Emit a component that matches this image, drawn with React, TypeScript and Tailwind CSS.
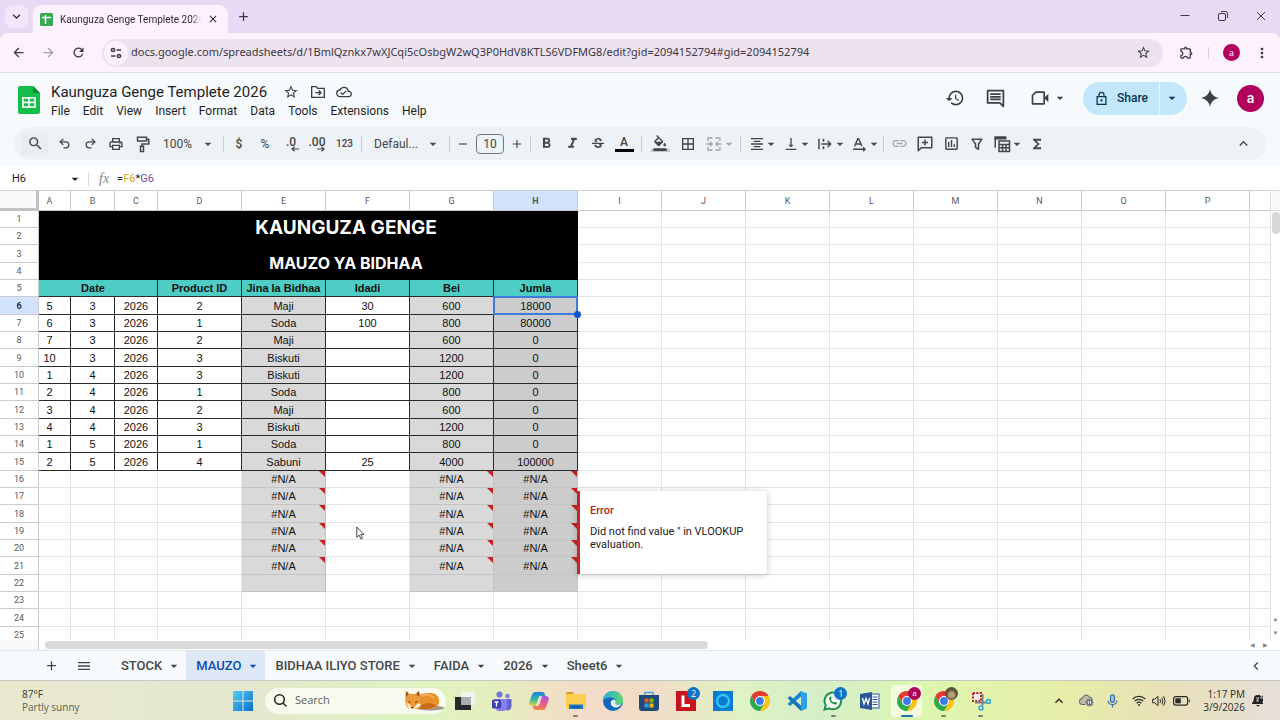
import React from "react";
import {
  MdSearch, MdOutlinePrint, MdArrowDropDown, MdRemove, MdAdd, MdFormatBold, MdFormatItalic, MdStrikethroughS,
  MdFormatColorFill, MdBorderAll, MdFormatAlignCenter, MdVerticalAlignBottom, MdLink, MdFunctions,
  MdKeyboardArrowUp, MdKeyboardArrowDown, MdKeyboardArrowLeft, MdStarBorder, MdHistory, MdMenu, MdArrowBack,
  MdArrowForward, MdRefresh, MdMoreVert, MdClose, MdOutlineCloudDone, MdOutlineInsertChart, MdOutlineExtension,
} from "react-icons/md";
import { Undo2, Redo2 } from "lucide-react";

type Kids = { children?: React.ReactNode };

function Line({ children, size = 18 }: Kids & { size?: number }) {
  return (
    <svg width={size} height={size} viewBox="0 0 24 24" fill="none" stroke="currentColor" strokeWidth="2" aria-hidden="true">
      {children}
    </svg>
  );
}

const FilterIcon = () => <Line><path d="M5.500 5.500h13L14 12v7l-4-2.500V12z" strokeLinejoin="round" /></Line>;
const PaintIcon = () => (
  <Line><path d="M6 3h12v5H6zM18 5.500h3V12h-9v3M10 15h4v7h-4z" /></Line>
);
const MergeIcon = () => (
  <Line><path d="M10 4H4v4M10 20H4v-4M14 4h6v4M14 20h6v-4M2 12h7M6.500 9l3 3-3 3M22 12h-7M17.500 9l-3 3 3 3" strokeWidth="1.700" /></Line>
);
const WrapIcon = () => <Line><path d="M4 5v14M10 5v4M10 15v4M7 12h12M15.500 8l4 4-4 4" /></Line>;
const RotateIcon = () => <Line><path d="M6 15l4.500-10h1L16 15M7.500 12h7M4 19h16M17.500 16.500l2.500 2.500-2.500 2.500" strokeWidth="1.900" /></Line>;
const AddCommentIcon = () => <Line><path d="M3 21V3h18v14H7zM12 6v8M8 10h8" strokeLinejoin="round" /></Line>;
const CommentIcon = () => <Line size={21}><path d="M3 3h18v18l-4-4H3zM6 7h12M6 10h12M6 13h12" strokeLinejoin="round" /></Line>;
const TableViewIcon = () => (
  <Line><path d="M3 17V3h14M8 8h14v14H8zM8 12.500h14M8 17h14M12.700 12.500V22M17.300 12.500V22" /><path d="M3 3h14v2H3z" fill="currentColor" /></Line>
);
const FolderMoveIcon = () => (
  <Line size={16}><path d="M2.500 20V4h7l2 2.500h10V20zM8 13h8M13 9.500l3.500 3.500-3.500 3.500" /></Line>
);
const MeetIcon = () => (
  <Line size={20}><path d="M7 5h10v14H3V9z" strokeLinejoin="round" /><path d="M17 12l5-5v10z" fill="currentColor" stroke="none" /></Line>
);
const LockIcon = () => (
  <Line size={15}><path d="M5 9h14v12.500H5zM8 9V6a4 4 0 0 1 8 0v3" /><circle cx="12" cy="15" r="1.800" fill="currentColor" stroke="none" /></Line>
);
const DecimalIcon = ({ more }: { more?: boolean }) => (
  <span className="flex flex-col items-center text-xs leading-3 font-medium">
    {more ? ".00" : ".0"}
    <svg className="-mt-0.5 ml-2" width="8" height="6" viewBox="0 0 8 6" fill="none" stroke="currentColor" strokeWidth="1.200" aria-hidden="true">
      {more ? <path d="M0 3h7M4.500 .7 7 3 4.500 5.300" /> : <path d="M8 3H1M3.500 .7 1 3l2.500 2.300" />}
    </svg>
  </span>
);

function Tool({ label, wide, children }: Kids & { label: string; wide?: boolean }) {
  return (
    <button aria-label={label} className={`flex h-7 shrink-0 items-center justify-center ${wide ? "w-7" : "w-[26px]"}`}>
      {children}
    </button>
  );
}
function DropTool({ label, children }: Kids & { label: string }) {
  return (
    <button aria-label={label} className="flex h-7 w-[34px] shrink-0 items-center justify-center">
      {children}
      <MdArrowDropDown className="-mr-1 -ml-0.5 shrink-0" size={16} />
    </button>
  );
}
const Sep = ({ wide }: { wide?: boolean }) => <span className={`h-4 w-px shrink-0 bg-[#c7cace] ${wide ? "mx-1" : "mx-0.5"}`} />;

function SheetsLogo() {
  return (
    <svg className="mt-1" width="22" height="28" viewBox="0 0 22 28" aria-hidden="true">
      <path d="M2 0h13l7 7v19a2 2 0 0 1-2 2H2a2 2 0 0 1-2-2V2a2 2 0 0 1 2-2z" fill="#15be4b" />
      <path d="M15 0l7 7h-7z" fill="#0b8a34" />
      <path d="M4 11h14v11H4zM5.800 12.800v2.700H10v-2.700zm6 0v2.700h4.400v-2.700zm-6 4.500v2.900H10v-2.900zm6 0v2.900h4.400v-2.900z" fill="#e8fbee" fillRule="evenodd" />
    </svg>
  );
}

function TabStrip() {
  return (
    <div className="flex h-[33px] shrink-0 items-end bg-[#e8daf4] text-[#2a2530]">
      <button aria-label="Search tabs" className="mb-[5px] ml-[5px] flex size-[23px] items-center justify-center rounded-lg bg-[#f2e7fa]">
        <MdKeyboardArrowDown size={15} />
      </button>
      <div className="ml-[5px] flex h-7 w-[195px] items-center rounded-t-[9px] bg-[#fcf1fc] pl-[7px]">
        <svg width="13" height="13" viewBox="0 0 13 13" aria-hidden="true">
          <rect width="13" height="13" rx="1.500" fill="#35a852" />
          <path d="M2 4.500h9M5.500 2v9" stroke="#fff" strokeWidth="1.500" />
        </svg>
        <span className="ml-[7px] w-[147px] shrink-0 bg-[linear-gradient(to_right,#2a2530_90%,transparent_96%)] bg-clip-text font-[Roboto,sans-serif] text-[10px] whitespace-nowrap text-transparent">Kaunguza Genge Templete 2026</span>
        <button aria-label="Close tab"><MdClose size={12} /></button>
      </div>
      <button aria-label="New tab" className="mb-[9px] ml-2 text-[#3c3644]"><MdAdd size={15} /></button>
      <div className="mb-3 ml-auto flex items-center gap-7 pr-3.5 text-[#3c3644]">
        <button aria-label="Minimize"><svg width="10" height="10" viewBox="0 0 10 10" stroke="currentColor"><path d="M.5 4.500h9" /></svg></button>
        <button aria-label="Restore">
          <svg width="10" height="10" viewBox="0 0 10 10" fill="none" stroke="currentColor"><rect x=".5" y="2.500" width="7" height="7" rx="1.500" /><path d="M3 .5h4.500a2 2 0 0 1 2 2V7" /></svg>
        </button>
        <button aria-label="Close"><svg width="10" height="10" viewBox="0 0 10 10" stroke="currentColor"><path d="M1 1l8 8M9 1l-8 8" /></svg></button>
      </div>
    </div>
  );
}

function AddressBar() {
  return (
    <div className="bg-[#e8daf4]">
      <div className="flex h-10 items-center rounded-t-lg border-b border-[#e0dbe6] bg-[#fcf1fc] pr-2.5 pl-[11px] text-[#3c3644]">
        <button aria-label="Back"><MdArrowBack size={15} /></button>
        <button aria-label="Forward" className="ml-[15px] text-[#a59dab]"><MdArrowForward size={15} /></button>
        <button aria-label="Reload" className="ml-[15px]"><MdRefresh size={15} /></button>
        <div className="ml-4 flex h-7 flex-1 items-center rounded-full bg-[#ece3ef] pr-3 pl-0.5">
          <button aria-label="Site information" className="flex size-6 shrink-0 items-center justify-center rounded-full bg-[#fcf1fc]">
            <svg width="12" height="12" viewBox="0 0 12 12" fill="none" stroke="currentColor" strokeWidth="1.500"><circle cx="3" cy="3" r="1.600" /><path d="M6.500 3H11M1 9h4.500" /><circle cx="9" cy="9" r="1.600" /></svg>
          </button>
          <input aria-label="Address" className="ml-[3px] min-w-0 flex-1 bg-transparent font-['Noto_Sans',sans-serif] text-[11px] outline-none" defaultValue="docs.google.com/spreadsheets/d/1BmlQznkx7wXJCqi5cOsbgW2wQ3P0HdV8KTLS6VDFMG8/edit?gid=2094152794#gid=2094152794" />
          <button aria-label="Bookmark this tab"><MdStarBorder size={15} /></button>
        </div>
        <button aria-label="Extensions" className="ml-4"><MdOutlineExtension size={15} /></button>
        <span className="ml-3.5 h-3 w-px bg-[#dccfe0]" />
        <button aria-label="Profile" className="ml-3.5 flex size-[17px] items-center justify-center rounded-full bg-[#b0005c] text-[9px] leading-none text-white">a</button>
        <button aria-label="Browser menu" className="ml-3.5"><MdMoreVert size={16} /></button>
      </div>
    </div>
  );
}

const menus = ["File", "Edit", "View", "Insert", "Format", "Data", "Tools", "Extensions", "Help"];

function DocHeader() {
  return (
    <header className="flex h-[50px] shrink-0 items-center pr-4 pl-[18px] text-[#3c4043]">
      <SheetsLogo />
      <div className="ml-[11px] pt-1.5">
        <div className="flex h-5 items-center">
          <h1 className="text-[15px] leading-5 text-[#1f1f1f]">Kaunguza Genge Templete 2026</h1>
          <button aria-label="Star" className="ml-4"><MdStarBorder size={16} /></button>
          <button aria-label="Move" className="ml-[11px]"><FolderMoveIcon /></button>
          <button aria-label="Document status" className="ml-2.5"><MdOutlineCloudDone size={16} /></button>
        </div>
        <nav className="flex gap-[13px] text-xs leading-[18px] text-[#1f1f1f]">
          {menus.map((m) => <button key={m}>{m}</button>)}
        </nav>
      </div>
      <div className="ml-auto flex items-center">
        <button aria-label="Version history"><MdHistory size={20} /></button>
        <button aria-label="Comments" className="ml-5"><CommentIcon /></button>
        <button aria-label="Join a call" className="ml-6 flex items-center"><MeetIcon /><MdArrowDropDown className="ml-0.5" size={16} /></button>
        <div className="ml-[15px] flex h-[33px] overflow-hidden rounded-full bg-[#c2e7fb] text-[#0a3350]">
          <button className="flex w-[76px] items-center justify-center gap-2 text-xs font-medium"><LockIcon />Share</button>
          <button aria-label="Share options" className="flex w-7 items-center border-l border-[#eaf6fd] pl-1"><MdArrowDropDown size={16} /></button>
        </div>
        <button aria-label="Gemini" className="ml-3.5">
          <svg width="18" height="18" viewBox="0 0 18 18" fill="currentColor"><path d="M9 0c.8 5 4 8.200 9 9-5 .8-8.200 4-9 9-.8-5-4-8.200-9-9 5-.8 8.200-4 9-9z" /></svg>
        </button>
        <button aria-label="Account" className="ml-[18px] flex size-[27px] items-center justify-center rounded-full bg-[#b0005c] text-sm leading-none font-medium text-white">a</button>
      </div>
    </header>
  );
}

function Toolbar() {
  return (
    <div role="toolbar" aria-label="Formatting" className="mx-3.5 mt-1 mb-1.5 flex h-[33px] shrink-0 items-center rounded-full bg-[#edf2f7] pr-3.5 pl-2 text-xs text-[#444746]">
      <button aria-label="Search the menus" className="mr-[3px] flex h-6 w-[26px] items-center justify-center rounded bg-[#e9edf2]"><MdSearch size={17} /></button>
      <Tool label="Undo"><Undo2 size={13} strokeWidth={2.4} /></Tool>
      <Tool label="Redo"><Redo2 size={13} strokeWidth={2.4} /></Tool>
      <Tool label="Print"><MdOutlinePrint size={16} /></Tool>
      <Tool label="Paint format"><PaintIcon /></Tool>
      <label className="flex w-[66px] items-center pl-2">
        <select aria-label="Zoom" className="w-[37px] appearance-none bg-transparent outline-none"><option>100%</option></select>
        <MdArrowDropDown size={16} />
      </label>
      <Sep />
      <Tool label="Format as currency"><span className="font-medium">$</span></Tool>
      <Tool label="Format as percent">%</Tool>
      <Tool label="Decrease decimal places"><DecimalIcon /></Tool>
      <Tool label="Increase decimal places"><DecimalIcon more /></Tool>
      <button aria-label="More formats" className="w-[29px] text-[10px] font-medium">123</button>
      <Sep />
      <label className="flex w-[83px] items-center pl-2.5">
        <select aria-label="Font" className="w-[51px] appearance-none bg-transparent outline-none"><option>Defaul...</option></select>
        <MdArrowDropDown size={16} />
      </label>
      <Sep />
      <button aria-label="Decrease font size" className="flex w-[22px] justify-center"><MdRemove size={14} /></button>
      <input aria-label="Font size" defaultValue="10" className="mx-0.5 h-5 w-7 rounded border border-[#747775] bg-transparent text-center outline-none" />
      <button aria-label="Increase font size" className="flex w-[22px] justify-center"><MdAdd size={14} /></button>
      <Sep />
      <Tool label="Bold"><MdFormatBold size={17} /></Tool>
      <Tool label="Italic"><MdFormatItalic size={17} /></Tool>
      <Tool label="Strikethrough"><MdStrikethroughS size={16} /></Tool>
      <Tool label="Text color"><span className="flex w-[19px] flex-col items-center border-b-[3px] border-black leading-[14px] font-medium">A</span></Tool>
      <Sep wide />
      <Tool label="Fill color" wide><span className="flex w-[19px] flex-col items-center border-b-[3px] border-[#c4c7ca]"><MdFormatColorFill className="-mb-0.5" size={16} /></span></Tool>
      <Tool label="Borders" wide><MdBorderAll size={16} /></Tool>
      <span className="flex text-[#a3a6a9]"><DropTool label="Merge cells"><MergeIcon /></DropTool></span>
      <Sep wide />
      <DropTool label="Horizontal align"><MdFormatAlignCenter size={16} /></DropTool>
      <DropTool label="Vertical align"><MdVerticalAlignBottom size={16} /></DropTool>
      <DropTool label="Text wrapping"><WrapIcon /></DropTool>
      <DropTool label="Text rotation"><RotateIcon /></DropTool>
      <Sep />
      <span className="flex text-[#a3a6a9]"><Tool label="Insert link"><MdLink size={17} /></Tool></span>
      <Tool label="Insert comment"><AddCommentIcon /></Tool>
      <Tool label="Insert chart"><MdOutlineInsertChart size={17} /></Tool>
      <Tool label="Create a filter"><FilterIcon /></Tool>
      <DropTool label="Table views"><TableViewIcon /></DropTool>
      <Tool label="Functions"><MdFunctions size={16} /></Tool>
      <button aria-label="Hide the menus" className="ml-auto"><MdKeyboardArrowUp size={17} /></button>
    </div>
  );
}

function FormulaBar() {
  return (
    <div className="flex h-6 shrink-0 items-center bg-white pt-0.5 text-[11px] text-[#202124]">
      <input aria-label="Name box" defaultValue="H6" className="w-14 bg-transparent pl-3 outline-none" />
      <button aria-label="Named ranges" className="ml-[11px]"><MdArrowDropDown size={16} /></button>
      <span className="ml-[5px] h-3.5 w-px bg-[#d5d7da]" />
      <span className="ml-2.5 font-['Liberation_Serif',serif] text-sm text-[#80868b] italic">fx</span>
      <div role="textbox" aria-label="Formula" className="ml-2 flex-1">
        =<span className="text-[#d9a21b]">F6</span>*<span className="text-[#7e4794]">G6</span>
      </div>
    </div>
  );
}

const colLetters = "ABCDEFGHIJKLMNOP".split("");
const colWidths: Record<string, string> = { A: "w-8", B: "w-11", C: "w-[43px]" };
const heads = ["Product ID", "Jina la Bidhaa", "Idadi", "Bei", "Jumla"];
const data: Record<number, string[]> = {
  6: ["5", "3", "2026", "2", "Maji", "30", "600", "18000"],
  7: ["6", "3", "2026", "1", "Soda", "100", "800", "80000"],
  8: ["7", "3", "2026", "2", "Maji", "", "600", "0"],
  9: ["10", "3", "2026", "3", "Biskuti", "", "1200", "0"],
  10: ["1", "4", "2026", "3", "Biskuti", "", "1200", "0"],
  11: ["2", "4", "2026", "1", "Soda", "", "800", "0"],
  12: ["3", "4", "2026", "2", "Maji", "", "600", "0"],
  13: ["4", "4", "2026", "3", "Biskuti", "", "1200", "0"],
  14: ["1", "5", "2026", "1", "Soda", "", "800", "0"],
  15: ["2", "5", "2026", "4", "Sabuni", "25", "4000", "100000"],
};

function ErrorCard() {
  return (
    <div role="tooltip" className="absolute top-[3px] left-full z-20 h-[83px] w-[190px] rounded-r border-l-[3px] border-[#c5262c] bg-white pt-[13px] pl-2.5 text-left font-[Roboto,sans-serif] text-[11px] leading-[13px] text-[#202124] shadow-[0_1px_6px_rgba(60,64,67,0.3)]">
      <p className="mb-2 font-medium text-[#b3261e]">Error</p>
      <p>Did not find value '' in VLOOKUP evaluation.</p>
    </div>
  );
}

function BodyCell({ row, col }: { row: number; col: number }) {
  const filled = row <= 15;
  const lookup = col === 4 || col === 6 || col === 7;
  const missing = !filled && row <= 21 && lookup;
  const shaded = lookup && row <= 22;
  const bg = shaded ? (col === 7 ? "bg-[#cccccc]" : "bg-[#d9d9d9]") : "bg-white";
  const border = filled ? "border-[#2a2a2a]" : shaded ? "border-[#c4c4c4]" : "border-[#e2e3e3]";
  return (
    <td className={`relative border-r border-b py-0 pl-0 text-center ${col === 0 ? "pr-2.5" : "pr-0"} ${bg} ${border}`}>
      {missing ? "#N/A" : data[row]?.[col]}
      {missing && <svg className="absolute top-0 right-0" width="6" height="6" aria-hidden="true"><path d="M0 0h6v6z" fill="#c5221f" /></svg>}
      {row === 6 && col === 7 && (
        <span className="absolute -top-px -right-px -bottom-px -left-px z-10 border-2 border-[#3f7bd6]">
          <span className="absolute -right-[5px] -bottom-[5px] size-[7px] rounded-full bg-[#1155cc]" />
        </span>
      )}
      {row === 17 && col === 7 && <ErrorCard />}
      {row === 19 && col === 5 && (
        <svg className="absolute top-[3px] left-[30px] z-10" width="9" height="14" viewBox="0 0 9 14" fill="#fff" stroke="#333" aria-hidden="true">
          <path d="M.8 1v10.300l2.400-2.200 1.600 3.800 1.700-.7-1.600-3.700h3z" strokeWidth=".9" />
        </svg>
      )}
    </td>
  );
}

function GridRow({ row }: { row: number }) {
  const height = row % 3 === 0 ? "h-[18px]" : "h-[17px]";
  const selected = row === 6;
  return (
    <tr className={height}>
      <th scope="row" className={`border-r border-b border-[#c9cbcc] p-0 font-[Roboto,sans-serif] text-[9px] ${selected ? "bg-[#d3e3fd] font-bold text-[#1f2a44]" : "bg-white font-normal text-[#575a5a]"}`}>
        {row}
      </th>
      {row === 1 && <td colSpan={8} rowSpan={2} className="bg-black py-0 pr-0 pl-[75px] text-center font-[Inter,sans-serif] text-[19px] leading-6 font-bold text-white">KAUNGUZA GENGE</td>}
      {row === 3 && <td colSpan={8} rowSpan={2} className="bg-black py-0 pr-0 pl-[75px] text-center font-[Inter,sans-serif] text-base leading-6 font-bold text-white">MAUZO YA BIDHAA</td>}
      {row === 5 && (
        <>
          <td colSpan={3} className="border-r border-b border-[#2a2a2a] bg-[#4ecdc4] py-0 pr-2.5 pl-0 text-center font-bold">Date</td>
          {heads.map((h) => <td key={h} className="border-r border-b border-[#2a2a2a] bg-[#4ecdc4] p-0 text-center font-bold whitespace-nowrap">{h}</td>)}
        </>
      )}
      {row > 5 && colLetters.slice(0, 8).map((c, i) => <BodyCell key={c} row={row} col={i} />)}
      {colLetters.slice(8).map((c) => <td key={c} className="border-r border-b border-[#e2e3e3]" />)}
      <td className="border-b border-[#e2e3e3]" />
    </tr>
  );
}

function Grid() {
  return (
    <div className="flex min-h-0 flex-1 overflow-hidden bg-white">
      <div className="min-w-0 flex-1 overflow-hidden">
        <table className="w-full table-fixed border-separate border-spacing-0 font-['Liberation_Sans',sans-serif] text-[11px] leading-[14px] text-[#111]">
          <colgroup>
            <col className="w-[39px]" />
            {colLetters.map((c) => <col key={c} className={colWidths[c] ?? "w-[84px]"} />)}
            <col />
          </colgroup>
          <thead>
            <tr className="h-[21px] font-[Roboto,sans-serif] text-[9px]">
              <th aria-label="Select all" className="border-t border-r-[3px] border-b-[3px] border-[#bfc1c3] border-t-[#c9cbcc] bg-[#f8f9fa] p-0" />
              {colLetters.map((c) => (
                <th key={c} scope="col" className={`border-t border-r border-b border-[#c9cbcc] py-0 pl-0 text-[#575a5a] ${c === "A" ? "pr-2.5" : "pr-0"} ${c === "H" ? "bg-[#d3e3fd] font-bold text-[#1f2a44]" : "bg-white font-normal"}`}>{c}</th>
              ))}
              <th className="border-t border-b border-[#c9cbcc] p-0" />
            </tr>
          </thead>
          <tbody>
            {Array.from({ length: 25 }, (_, i) => <GridRow key={i} row={i + 1} />)}
          </tbody>
        </table>
      </div>
      <div className="flex w-2.5 shrink-0 flex-col items-center border-l border-[#e2e3e3] bg-white">
        <div className="h-[21px] w-full border-y border-[#d9dbdc] bg-[#f8f9fa]" />
        <div className="mt-px h-[22px] w-2 rounded-full bg-[#d5d7d9]" />
        <div className="mt-auto flex flex-col items-center gap-2 pb-1 text-[6px] leading-[6px] text-[#80868b]"><span>▲</span><span>▼</span></div>
      </div>
    </div>
  );
}

function BottomScroll() {
  return (
    <div className="flex h-2.5 shrink-0 items-center bg-white">
      <div className="h-full w-[39px] border-r border-[#c9cbcc] bg-[#f8f9fa]" />
      <div className="flex-1 pl-1.5"><div className="h-2 w-[55%] rounded-full bg-[#d8d9db]" /></div>
      <div className="flex gap-2 pr-3 text-[6px] leading-[6px] text-[#80868b]"><span>◀</span><span>▶</span></div>
    </div>
  );
}

const sheets = ["STOCK", "MAUZO", "BIDHAA ILIYO STORE", "FAIDA", "2026", "Sheet6"];

function SheetTabs() {
  return (
    <div className="flex h-[31px] shrink-0 items-center border-y border-t-[#e3e6e9] border-b-[#c3c9bf] bg-[#f6fafd] pr-4 pl-11 text-[#444746]">
      <button aria-label="Add sheet"><MdAdd size={15} /></button>
      <button aria-label="All sheets" className="ml-[17px] mr-[19px]"><MdMenu size={16} /></button>
      {sheets.map((s) => (
        <button key={s} className={`flex h-full items-center pr-1 pl-2.5 text-[13px] font-medium ${s === "MAUZO" ? "bg-[#dfe8f6] text-[#0b4bb3]" : ""}`}>
          {s}<MdArrowDropDown className="ml-1" size={16} />
        </button>
      ))}
      <button aria-label="Show side panel" className="ml-auto"><MdKeyboardArrowLeft size={16} /></button>
    </div>
  );
}

function ChromeIcon() {
  return (
    <svg width="20" height="20" viewBox="0 0 20 20" aria-hidden="true">
      <path d="M10 5h8.660A10 10 0 0 1 10 20L14.330 12.500z" fill="#fbc116" />
      <path d="M10 20A10 10 0 0 1 1.340 5L5.670 12.500l4.330 2.500 4.330-2.500z" fill="#2da94f" />
      <path d="M1.340 5A10 10 0 0 1 18.660 5H10l-4.330 7.500z" fill="#e33b2e" />
      <circle cx="10" cy="10" r="5" fill="#fff" />
      <circle cx="10" cy="10" r="3.900" fill="#3a7bea" />
    </svg>
  );
}
const TaskViewIcon = () => (
  <svg width="20" height="20" viewBox="0 0 20 20"><rect x="6" y="1" width="14" height="13" fill="#f3f4f0" /><path d="M0 6h6v8h10v5H0z" fill="#26292b" /><rect x="6" y="6" width="10" height="8" fill="#a9adad" /></svg>
);
const TeamsIcon = () => (
  <svg width="20" height="20" viewBox="0 0 20 20"><circle cx="7.500" cy="3.500" r="3" fill="#6f75dc" /><circle cx="15.500" cy="5" r="2.300" fill="#7b7fe0" /><path d="M11 8h8.500v7a4 4 0 0 1-7 3z" fill="#6366cf" /><path d="M3 8h12v7a5.500 5.500 0 0 1-12 0z" fill="#8b7bf0" /><rect y="8.500" width="9" height="9" rx="1.500" fill="#3b3fb5" /><path d="M2.500 11h4M4.500 11v4.500" stroke="#fff" strokeWidth="1.300" /></svg>
);
const CopilotIcon = () => (
  <svg width="20" height="20" viewBox="0 0 20 20">
    <defs>
      <linearGradient id="cpA" x1="0" y1="0" x2="0" y2="1"><stop stopColor="#1f7fe0" /><stop offset=".5" stopColor="#2fb7a8" /><stop offset="1" stopColor="#e8d43a" /></linearGradient>
      <linearGradient id="cpB" x1="0" y1="0" x2="0" y2="1"><stop stopColor="#9b5be8" /><stop offset=".5" stopColor="#e8569a" /><stop offset="1" stopColor="#f08a4a" /></linearGradient>
    </defs>
    <path d="M6 1h7a3 3 0 0 1 2.800 2l.7 2H12q-2 0-2.600 2L7 15H3.500Q-.5 15 .4 11L3 3.500Q4 1 6 1z" fill="url(#cpA)" />
    <path d="M14 19H7a3 3 0 0 1-2.800-2l-.7-2H8q2 0 2.600-2L13 5h3.500q4 0 3.100 4L17 16.500Q16 19 14 19z" fill="url(#cpB)" />
  </svg>
);
const FolderIcon = () => (
  <svg width="20" height="20" viewBox="0 0 20 20"><path d="M0 2.500Q0 1 1.500 1h5l2 2.500H0z" fill="#d79a1e" /><rect y="3" width="20" height="15" rx="1.500" fill="#fccf52" /><path d="M3 13.500h14V18H3z" fill="#1b78c8" /><path d="M6 16h8" stroke="#0d4b85" strokeWidth="1.200" /></svg>
);
const EdgeIcon = () => (
  <svg width="20" height="20" viewBox="0 0 20 20">
    <defs><linearGradient id="edg" x1="0" y1="0" x2="1" y2="0"><stop stopColor="#2aa6e8" /><stop offset="1" stopColor="#5fdc6a" /></linearGradient></defs>
    <circle cx="10" cy="10" r="10" fill="#1267bd" />
    <path d="M0 10A10 10 0 0 1 20 9.500c0 3-2.200 4.300-4.500 4.300-2.500 0-3.500-.8-3-1.800C14 9 11.500 6.500 8 6.500 4 6.500 1 8 0 10z" fill="url(#edg)" />
    <path d="M12.500 12c-.5 1 .5 1.800 3 1.800 1.200 0 2.400-.3 3.200-1-1.500 3.500-6 4.700-8.700 3C7 14 7 10 10 8.500c2.500 0 3.500 2 2.500 3.500z" fill="#e9f3ee" />
  </svg>
);
const StoreIcon = () => (
  <svg width="20" height="20" viewBox="0 0 20 20"><path d="M6 5V1.500h8V5" fill="none" stroke="#48a8d8" strokeWidth="1.500" /><path d="M0 4h20v13a3 3 0 0 1-3 3H3a3 3 0 0 1-3-3z" fill="#204a78" /><path d="M5.500 7.500h4v4h-4z" fill="#f05125" /><path d="M10.500 7.500h4v4h-4z" fill="#7fba00" /><path d="M5.500 12.500h4v4h-4z" fill="#22a4ef" /><path d="M10.500 12.500h4v4h-4z" fill="#fdb900" /></svg>
);
const LIcon = () => (
  <svg width="20" height="20" viewBox="0 0 20 20"><rect width="20" height="20" fill="#c8141e" /><path d="M7 4.500v10h7" fill="none" stroke="#fff" strokeWidth="3" /></svg>
);
const RingIcon = () => (
  <svg width="20" height="20" viewBox="0 0 20 20"><rect width="20" height="20" fill="#0b7ad1" /><circle cx="10" cy="10" r="6" fill="none" stroke="#33c7f7" strokeWidth="2.300" /><path d="M7.500 14.500l1 3 2-1.500z" fill="#33c7f7" /></svg>
);
const CodeIcon = () => (
  <svg width="20" height="20" viewBox="0 0 20 20"><path d="M14 0l6 2.500v15L14 20z" fill="#2aa3e8" /><path d="M14 0v5.500L3 15l-2.500-2z" fill="#1a86cf" /><path d="M14 20v-5.500L3 5 .5 7z" fill="#1576b9" /></svg>
);
const WhatsIcon = () => (
  <svg width="20" height="20" viewBox="0 0 20 20" fill="none" stroke="#1f8f4f" strokeWidth="2"><path d="M1.500 18.500l1.200-4.300A8.300 8.300 0 1 1 6 17.300z" fill="#f2fbf0" /><path d="M6.500 6c.3-.8 1.300-.8 1.600 0l.6 1.500-.8 1.100c.6 1.400 1.600 2.400 3 3l1.100-.9 1.600.8c.6.400.4 1.300-.4 1.800-3 1.500-8-3.800-6.700-7.300z" fill="#1f8f4f" stroke="none" /></svg>
);
const WordIcon = () => (
  <svg width="20" height="20" viewBox="0 0 20 20"><rect x="10" y="3" width="9" height="14" fill="#fff" stroke="#2b579a" /><path d="M12.500 6h5M12.500 8.500h5M12.500 11h5M12.500 13.500h5" stroke="#2b579a" /><path d="M0 3l12-2v18L0 17z" fill="#2b579a" /><path d="M2.500 7l1.500 6 2-5.500L8 13l1.500-6" fill="none" stroke="#fff" strokeWidth="1.300" /></svg>
);
const SnipIcon = () => (
  <svg width="20" height="20" viewBox="0 0 20 20" fill="none"><rect x="2" y="2" width="8" height="8" fill="#f4efe6" stroke="#b8212c" strokeWidth="2" strokeDasharray="2 1.300" /><path d="M11.500 3v11.500M4 11.500h11.500" stroke="#7a7f85" strokeWidth="2" /><circle cx="10" cy="17" r="2" stroke="#27a5d9" strokeWidth="1.500" /><circle cx="17.500" cy="10.500" r="2" stroke="#27a5d9" strokeWidth="1.500" /></svg>
);
const FoxIcon = () => (
  <svg width="40" height="21" viewBox="0 0 40 21" aria-hidden="true">
    <ellipse cx="26" cy="18" rx="14" ry="2.500" fill="#9c9a8c" />
    <path d="M9 12C12 4 20 3 26 3c7 0 10 5 9 10s-7 6-13 6H8z" fill="#e8902e" />
    <path d="M14 18c3-5 12-6 18-3-3 4-10 5-18 3z" fill="#c96a1c" />
    <path d="M2 1l4 3h5l4-3c1 5 2 9-1 13-2 3-5 5-7 5s-4-1-5-4C1 11 1 6 2 1z" fill="#ef9a3a" />
    <path d="M2 1l2.500 3L2.200 7zM15 1l-2.500 3 2.700 3z" fill="#8a4a1c" />
    <path d="M3 13c2 0 4 2 5 6-3 0-5-2-5-6zM13 14c2-1 4 0 4 1-1 2-5 4-8 4z" fill="#fbe9cf" />
    <path d="M18 6c4-2 9-1 12 2" fill="none" stroke="#f4b562" strokeWidth="1.500" />
    <path d="M4.500 11.500l2 1M11 12.500l2.500-1M7 17.500h2" stroke="#4a2a12" />
  </svg>
);

type AppEntry = { name: string; icon: React.ReactNode; badge?: React.ReactNode; running?: boolean; active?: boolean };
const count = (n: string) => <span className="absolute -top-1 -right-1 flex size-[13px] items-center justify-center rounded-full bg-[#0f72c4] text-[9px] leading-none text-white">{n}</span>;
const apps: AppEntry[] = [
  { name: "Task view", icon: <TaskViewIcon /> },
  { name: "Teams", icon: <TeamsIcon /> },
  { name: "Copilot", icon: <CopilotIcon /> },
  { name: "File Explorer", icon: <FolderIcon />, running: true },
  { name: "Edge", icon: <EdgeIcon /> },
  { name: "Store", icon: <StoreIcon /> },
  { name: "Launcher", icon: <LIcon />, badge: count("2") },
  { name: "Assistant", icon: <RingIcon /> },
  { name: "Chrome", icon: <ChromeIcon /> },
  { name: "Code", icon: <CodeIcon /> },
  { name: "WhatsApp", icon: <WhatsIcon />, badge: count("1"), running: true },
  { name: "Word", icon: <WordIcon /> },
  { name: "Chrome work", icon: <ChromeIcon />, active: true, badge: <span className="absolute -top-1 -right-1 flex size-[13px] items-center justify-center rounded-full bg-[#b0005c] text-[8px] leading-none text-white">a</span> },
  { name: "Chrome personal", icon: <ChromeIcon />, running: true, badge: <span className="absolute -top-1 -right-1 size-[13px] rounded-full bg-[radial-gradient(circle_at_50%_60%,#c09a78_25%,#55563a_50%)]" /> },
  { name: "Snipping Tool", icon: <SnipIcon />, running: true },
];

function Taskbar() {
  return (
    <footer className="flex h-[39px] shrink-0 items-center bg-[linear-gradient(to_right,#e8e8cf_0%,#e4e8cf_20%,#def3c2_32%,#e4f0bd_38%,#f3dcc9_45%,#f1dcc8_51%,#dff3c3_58%,#d5eec8_64%,#dcf6b0_72%,#e4f4ac_77%,#e6eea8_83%,#e8e0b8_91%,#e6dfda_100%)] pl-[22px] font-['Open_Sans',sans-serif] text-[10px] text-[#33352c]">
      <button className="w-[211px] text-left leading-[13px]"><span className="block">87°F</span><span className="block text-[#5f6154]">Partly sunny</span></button>
      <button aria-label="Start">
        <svg width="20" height="20" viewBox="0 0 20 20"><defs><linearGradient id="win" x1="0" y1="0" x2="1" y2="1"><stop stopColor="#55cdf7" /><stop offset="1" stopColor="#0a6fca" /></linearGradient></defs><path d="M0 0h9.500v9.500H0zM10.500 0H20v9.500h-9.500zM0 10.500h9.500V20H0zM10.500 10.500H20V20h-9.500z" fill="url(#win)" /></svg>
      </button>
      <label className="ml-3 flex h-[26px] w-[181px] shrink-0 items-center rounded-full bg-[#f9faee] pl-2">
        <svg width="15" height="15" viewBox="0 0 15 15" fill="none" stroke="#222" strokeWidth="1.500" aria-hidden="true"><circle cx="6.500" cy="6.500" r="4.800" /><path d="M10 10l3.500 3.500" /></svg>
        <input aria-label="Search" placeholder="Search" className="ml-[7px] w-[109px] bg-transparent text-[11px] outline-none placeholder:text-[#5f6154]" />
        <FoxIcon />
      </label>
      <div className="ml-px flex w-[552px] shrink-0">
        {apps.map((a) => (
          <button key={a.name} aria-label={a.name} className="flex flex-1 justify-center">
            <span className={`relative flex h-8 w-[31px] items-center justify-center rounded ${a.active ? "bg-[#f4fadd]" : ""}`}>
              <span className="relative">{a.icon}{a.badge}</span>
              {a.running && <span className="absolute bottom-0 h-0.5 w-[5px] rounded-full bg-[#7d806f]" />}
              {a.active && <span className="absolute bottom-0 h-0.5 w-3 rounded-full bg-[#1a73b8]" />}
            </span>
          </button>
        ))}
      </div>
      <div className="ml-auto flex items-center pr-4 text-[#2a2b28]">
        <MdKeyboardArrowUp size={16} />
        <svg className="ml-3" width="15" height="13" viewBox="0 0 15 13" fill="none" stroke="#555" aria-hidden="true"><path d="M6 10.500H3.500a3 3 0 0 1-.3-6A4 4 0 0 1 10.500 3a3.500 3.500 0 0 1 3 2.500" fill="#b9bba8" /><circle cx="10.500" cy="8.500" r="3.500" fill="#777" stroke="#888" /><path d="M9.500 7v3M11.500 7v3" stroke="#ddd" /></svg>
        <svg className="ml-[13px]" width="11" height="14" viewBox="0 0 11 14" fill="none" stroke="#3a6da8" strokeWidth="1.200" aria-hidden="true"><rect x="3.500" y=".8" width="4" height="7.500" rx="2" fill="#9cc3e6" /><path d="M1 6.500a4.500 4 0 0 0 9 0M5.500 10.500V13.500" /></svg>
        <svg className="ml-3.5" width="14" height="11" viewBox="0 0 14 11" fill="none" stroke="currentColor" strokeWidth="1.200" aria-hidden="true"><path d="M.7 4a9 9 0 0 1 12.600 0M2.700 6.200a6 6 0 0 1 8.600 0M4.700 8.200a3.300 3.300 0 0 1 4.600 0" /><circle cx="7" cy="10" r="1" fill="currentColor" stroke="none" /></svg>
        <svg className="ml-1.5" width="14" height="12" viewBox="0 0 14 12" fill="none" stroke="currentColor" aria-hidden="true"><path d="M.6 4.200v3.600h2L6 10.600V1.400L2.600 4.200zM8 4.200q1 1.800 0 3.600M9.800 2.700q2 3.300 0 6.600M11.600 1.200q3 4.800 0 9.600" /></svg>
        <svg className="ml-[7px]" width="17" height="10" viewBox="0 0 17 10" fill="none" stroke="currentColor" aria-hidden="true"><rect x=".6" y=".6" width="14" height="8.500" rx="2" strokeWidth="1.200" /><rect x="2.300" y="2.300" width="5.500" height="5" fill="currentColor" stroke="none" /><path d="M16.300 3.500v2.800" /></svg>
        <div className="ml-[13px] text-right leading-[13px]"><div>1:17 PM</div><div>3/9/2026</div></div>
        <svg className="ml-[7px]" width="12" height="13" viewBox="0 0 12 13" aria-hidden="true"><path d="M2 4q0-3 4-3h5v6l-1 1.500H11V10H0V8.500h1zM4 11h4l-2 1.800z" fill="#222" /><path d="M4 4h3L4.500 7H7M8 1.500h2.500L8.500 4H11" fill="none" stroke="#e8e3d8" strokeWidth=".9" /></svg>
      </div>
    </footer>
  );
}

export default function App() {
  return (
    <div className="flex h-screen flex-col overflow-hidden bg-[#f6fafd] font-[Roboto,sans-serif]">
      <div className="shrink-0 font-['Open_Sans',sans-serif]">
        <TabStrip />
        <AddressBar />
      </div>
      <DocHeader />
      <Toolbar />
      <FormulaBar />
      <Grid />
      <BottomScroll />
      <SheetTabs />
      <Taskbar />
    </div>
  );
}
